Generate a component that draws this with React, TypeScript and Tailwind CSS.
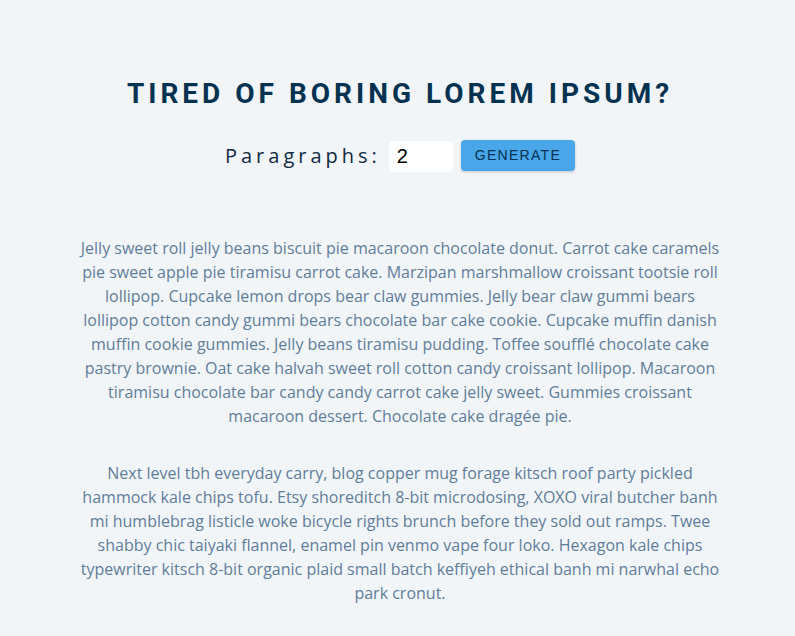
import { useState } from "react";

const paragraphs = [
  "Jelly sweet roll jelly beans biscuit pie macaroon chocolate donut. Carrot cake caramels pie sweet apple pie tiramisu carrot cake. Marzipan marshmallow croissant tootsie roll lollipop. Cupcake lemon drops bear claw gummies. Jelly bear claw gummi bears lollipop cotton candy gummi bears chocolate bar cake cookie. Cupcake muffin danish muffin cookie gummies. Jelly beans tiramisu pudding. Toffee soufflé chocolate cake pastry brownie. Oat cake halvah sweet roll cotton candy croissant lollipop. Macaroon tiramisu chocolate bar candy candy carrot cake jelly sweet. Gummies croissant macaroon dessert. Chocolate cake dragée pie.",
  "Next level tbh everyday carry, blog copper mug forage kitsch roof party pickled hammock kale chips tofu. Etsy shoreditch 8-bit microdosing, XOXO viral butcher banh mi humblebrag listicle woke bicycle rights brunch before they sold out ramps. Twee shabby chic taiyaki flannel, enamel pin venmo vape four loko. Hexagon kale chips typewriter kitsch 8-bit organic plaid small batch keffiyeh ethical banh mi narwhal echo park cronut.",
];

export default function App() {
  const [count, setCount] = useState("2");

  return (
    <div className="min-h-screen bg-[#f1f5f8] pl-[5px] font-['Open_Sans',sans-serif]">
      <section className="mx-auto w-[640px] pt-[76px] text-center">
        <h3 className="font-['Roboto',sans-serif] text-[28px] font-bold uppercase leading-[1.25] tracking-[0.25rem] text-[#063251]">
          Tired of boring lorem ipsum?
        </h3>

        {/* form */}
        <form
          className="mt-[26px] flex h-[37px] items-center justify-center"
          onSubmit={(e) => e.preventDefault()}
        >
          <label
            htmlFor="amount"
            className="mr-2 text-[20px] tracking-[0.25rem] text-[#102a42]"
          >
            Paragraphs:
          </label>
          <input
            id="amount"
            type="text"
            value={count}
            onChange={(e) => setCount(e.target.value)}
            className="mt-[2px] h-[31px] w-16 rounded-[0.25rem] bg-white px-2 font-['Liberation_Sans',sans-serif] text-[20px] text-black outline-none"
          />
          <button
            type="submit"
            className="ml-2 h-[31px] rounded-[0.25rem] bg-[#49a6e9] px-[14px] font-['Liberation_Sans',sans-serif] text-[14px] uppercase tracking-[0.08rem] text-[#063251] shadow-[0_1px_3px_rgba(0,0,0,0.2)]"
          >
            generate
          </button>
        </form>

        <article className="mt-[62px]">
          {paragraphs.map((p, i) => (
            <p key={i} className="mb-[33px] text-[16px] leading-6 text-[#617d98]">
              {p}
            </p>
          ))}
        </article>
      </section>
    </div>
  );
}
